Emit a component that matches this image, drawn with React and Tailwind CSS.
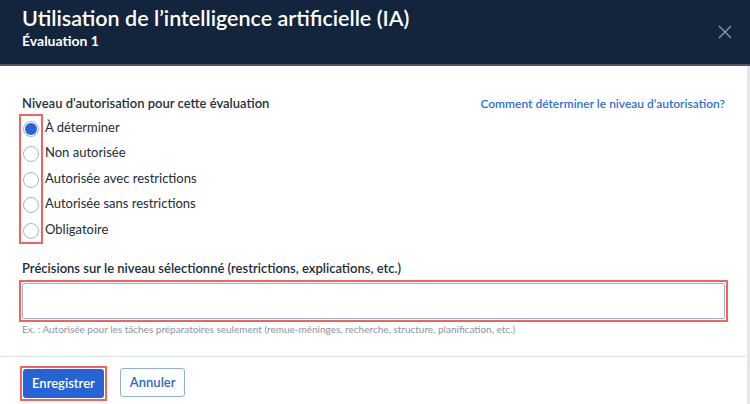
import { useState } from 'react'

const LEVELS = [
  'À déterminer',
  'Non autorisée',
  'Autorisée avec restrictions',
  'Autorisée sans restrictions',
  'Obligatoire',
]

export default function App() {
  const [level, setLevel] = useState(0)

  return (
    <div className="w-[750px] h-[404px] bg-white overflow-hidden font-['Lato','Liberation_Sans',sans-serif] text-[#1e2733]">
      {/* header */}
      <header className="h-[66px] bg-[#13243d] border-b-2 border-[#4a5868] flex items-start justify-between pl-[22px] pr-[18px]">
        <div className="pt-[4px]">
          <h1 className="text-[21.5px] leading-[28px] font-semibold text-white">
            Utilisation de l’intelligence artificielle (IA)
          </h1>
          <p className="text-[14px] leading-[18px] font-bold text-white">Évaluation 1</p>
        </div>
        <button className="mt-[25px] text-[#8d9bb0]">
          <svg width="14" height="14" viewBox="0 0 14 14" fill="none" stroke="currentColor" strokeWidth="1.3">
            <path d="M1 1l12 12M13 1L1 13" />
          </svg>
        </button>
      </header>

      <div className="border-r-[3px] border-[#e5e7eb] h-[338px] flex flex-col">
        <main className="px-[22px] pt-[28px] flex-1">
          <div className="flex items-baseline justify-between">
            <span className="text-[13px] font-semibold text-[#27303d]">Niveau d'autorisation pour cette évaluation</span>
            <a className="text-[12px] font-semibold text-[#2f6fd8]">Comment déterminer le niveau d’autorisation?</a>
          </div>

          <div className="flex mt-0 -ml-[3px]">
            <div className="flex flex-col border-2 border-[#f06363] px-[2px] pt-[5px] pb-[3px] gap-[9.5px]">
              {LEVELS.map((l, i) => (
                <button
                  key={l}
                  onClick={() => setLevel(i)}
                  className="w-[16px] h-[16px] rounded-full border border-[#a8b4c4] bg-white flex items-center justify-center"
                >
                  {level === i && <span className="w-[12px] h-[12px] rounded-full bg-[#2563d6]" />}
                </button>
              ))}
            </div>
            <div className="flex flex-col pl-[2px] pt-[4px] gap-[7.5px]">
              {LEVELS.map(l => (
                <span key={l} className="text-[13px] leading-[18px] text-[#222b36]">{l}</span>
              ))}
            </div>
          </div>

          <label className="block mt-[15px] text-[13px] font-semibold text-[#222b36]">
            Précisions sur le niveau sélectionné (restrictions, explications, etc.)
          </label>
          <div className="mt-[2px] -ml-[3px] mr-[-3px] border-2 border-[#f06363] p-[1px]">
            <input className="w-full h-[36px] border border-[#a8b4c4] rounded-[2px] outline-none" />
          </div>
          <p className="mt-0 text-[10px] text-[#8a94a3]">
            Ex. : Autorisée pour les tâches préparatoires seulement (remue-méninges, recherche, structure, planification, etc.)
          </p>
        </main>

        <footer className="border-t border-[#dde3ea] h-[48px] px-[20px] pt-[9px] flex items-start gap-[13px]">
          <div className="border-2 border-[#f06363] p-[1px]">
            <button className="h-[29px] px-[9px] rounded-[3px] bg-[#2563d6] text-white text-[13px] font-semibold">
              Enregistrer
            </button>
          </div>
          <button className="mt-[2px] h-[29px] px-[9px] rounded-[3px] border border-[#8fb0e6] text-[#2f66c8] text-[13px] font-semibold">
            Annuler
          </button>
        </footer>
      </div>
    </div>
  )
}
